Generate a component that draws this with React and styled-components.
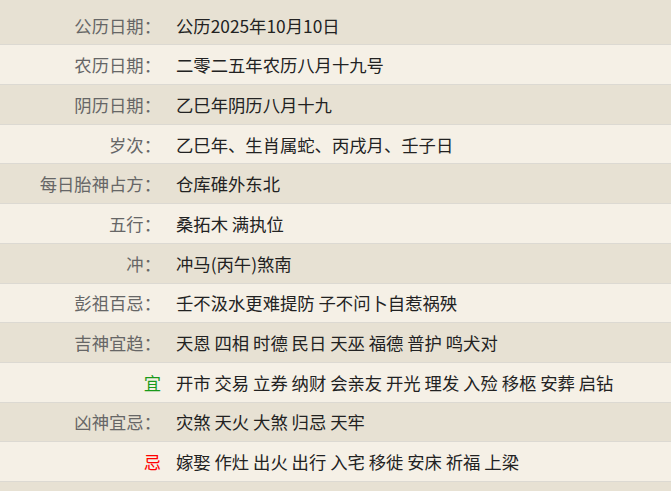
import React from "react";
import styled, { createGlobalStyle } from "styled-components";

const Global = createGlobalStyle`
  html, body { margin: 0; padding: 0; }
  body {
    background: #e7e1d3;
    font-family: "Noto Sans CJK SC", "Noto Sans", sans-serif;
    font-size: 13pt;
  }
`;

const Table = styled.div`
  display: flex;
  flex-direction: column;
  padding-top: 5.7px;
`;

const Row = styled.div`
  display: grid;
  grid-template-columns: 161px 1fr;
  column-gap: 15px;
  align-items: center;
  height: 38.7px;
  border-bottom: 1px solid #dcd9d2;
  background: ${(p) => (p.$alt ? "#f5f0e6" : "#e7e1d3")};
`;

const Label = styled.div`
  text-align: right;
  color: ${(p) => p.$color || "#666"};
  white-space: nowrap;
`;

const Value = styled.div`
  color: #222;
  white-space: nowrap;
`;

const rows = [
  ["公历日期：", "公历2025年10月10日"],
  ["农历日期：", "二零二五年农历八月十九号"],
  ["阴历日期：", "乙巳年阴历八月十九"],
  ["岁次：", "乙巳年、生肖属蛇、丙戌月、壬子日"],
  ["每日胎神占方：", "仓库碓外东北"],
  ["五行：", "桑拓木 满执位"],
  ["冲：", "冲马(丙午)煞南"],
  ["彭祖百忌：", "壬不汲水更难提防 子不问卜自惹祸殃"],
  ["吉神宜趋：", "天恩 四相 时德 民日 天巫 福德 普护 鸣犬对"],
  ["宜", "开市 交易 立券 纳财 会亲友 开光 理发 入殓 移柩 安葬 启钻", "#1a9a1a"],
  ["凶神宜忌：", "灾煞 天火 大煞 归忌 天牢"],
  ["忌", "嫁娶 作灶 出火 出行 入宅 移徙 安床 祈福 上梁", "#ff0000"],
];

export default function App() {
  return (
    <>
      <Global />
      <Table>
        {rows.map(([label, value, color], i) => (
          <Row key={i} $alt={i % 2 === 1}>
            <Label $color={color}>{label}</Label>
            <Value>{value}</Value>
          </Row>
        ))}
      </Table>
    </>
  );
}
